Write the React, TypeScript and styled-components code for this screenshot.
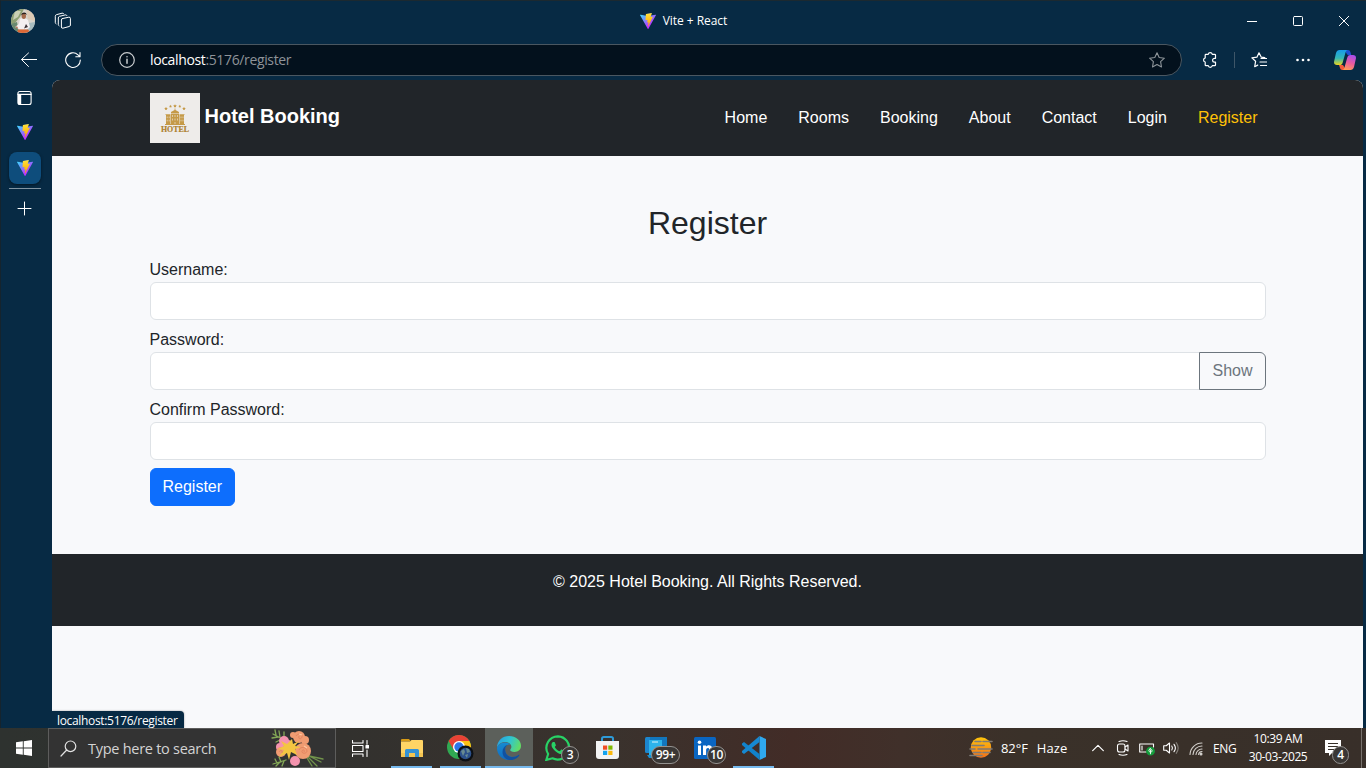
import React from "react";
import styled, { createGlobalStyle, css } from "styled-components";

const UI = `"Open Sans", "Noto Sans", sans-serif`;
const PAGE = `"Liberation Sans", Arial, sans-serif`;

const GlobalStyle = createGlobalStyle`
  *, *::before, *::after { box-sizing: border-box; }
  body { margin: 0; overflow: hidden; background: #072a44; }
  h2, p { margin: 0; }
`;

/* ---------- browser window ---------- */

const Screen = styled.div`
  width: 1366px;
  height: 768px;
  display: flex;
  flex-direction: column;
  overflow: hidden;
  font-family: ${UI};
  color: #fff;
`;

const Browser = styled.div`
  height: 728px;
  display: flex;
  flex-direction: column;
  background: #072a44;
  border-top: 1px solid #1c2930;
  border-left: 1px solid #15242e;
`;

const TitleBar = styled.div`
  height: 39px;
  display: grid;
  grid-template-columns: 1fr auto 1fr;
  align-items: center;
  flex: none;
`;

const ProfileArea = styled.div`
  display: flex;
  align-items: center;
  gap: 19px;
  padding-left: 10px;
`;

const TabTitle = styled.div`
  display: flex;
  align-items: center;
  gap: 7px;
  font-size: 12px;
  line-height: 16px;
  font-weight: 500;
  letter-spacing: -0.05px;
`;

const WindowControls = styled.div`
  display: flex;
  justify-content: flex-end;
  margin-right: -1px;
`;

const WindowButton = styled.div`
  width: 46px;
  height: 39px;
  display: flex;
  align-items: center;
  justify-content: center;
`;

const Toolbar = styled.div`
  height: 40px;
  display: flex;
  align-items: center;
  flex: none;
`;

const ToolSlot = styled.div<{ $w: number }>`
  width: ${(p) => p.$w}px;
  height: 32px;
  flex: none;
  display: flex;
  align-items: center;
  justify-content: center;
`;

const AddressBar = styled.div`
  width: 1081px;
  height: 32px;
  flex: none;
  display: flex;
  align-items: center;
  padding: 0 16px 0 17px;
  border: 1px solid #4a5761;
  border-radius: 16px;
  background: #03111d;
`;

const Url = styled.div`
  flex: 1;
  margin-left: 15px;
  font-size: 14px;
  line-height: 20px;
  letter-spacing: -0.36px;
  color: #8e9398;
  b { font-weight: 400; color: #fff; }
`;

const ToolDivider = styled.div`
  width: 1px;
  height: 16px;
  background: #3e5668;
`;

const BrowserBody = styled.div`
  flex: 1;
  min-height: 0;
  display: flex;
`;

const Sidebar = styled.div`
  width: 51px;
  flex: none;
  display: flex;
  flex-direction: column;
  align-items: center;
  padding: 10px 4px 0 0;
`;

const SideItem = styled.div<{ $h: number; $top?: number; $active?: boolean }>`
  width: 32px;
  height: ${(p) => p.$h}px;
  padding-top: ${(p) => p.$top ?? 0}px;
  flex: none;
  display: flex;
  align-items: center;
  justify-content: center;
  ${(p) =>
    p.$active &&
    css`
      background: #0e4d7c;
      border-radius: 8px;
      box-shadow: 0 1px 3px rgba(0, 0, 0, 0.5);
    `}
`;

const SideDivider = styled.div`
  width: 32px;
  height: 1px;
  margin: 4px 0 12px;
  background: #8294a2;
`;

/* ---------- web page ---------- */

const Viewport = styled.div`
  position: relative;
  width: 1311px;
  border-radius: 8px 8px 0 0;
  overflow: hidden;
  background: #f8f9fb;
  color: #212529;
  font-family: ${PAGE};
  font-size: 16px;
  line-height: 24px;
`;

const Navbar = styled.nav`
  height: 76px;
  display: flex;
  align-items: center;
  justify-content: space-between;
  padding: 0 97.5px;
  background: #212529;
`;

const Brand = styled.div`
  display: flex;
  align-items: center;
  gap: 5px;
  color: #fff;
  font-size: 20px;
  font-weight: 700;
  line-height: 30px;
  span { margin-top: -4px; }
`;

const NavLinks = styled.div`
  display: flex;
  gap: 15px;
`;

const NavLink = styled.a<{ $active?: boolean }>`
  padding: 0 8px;
  color: ${(p) => (p.$active ? "#ffc107" : "#fff")};
`;

const Main = styled.main`
  height: 398px;
  padding: 48px 97.5px;
`;

const Heading = styled.h2`
  height: 38px;
  margin-bottom: 16px;
  text-align: center;
  font-size: 32px;
  font-weight: 400;
  line-height: 38px;
`;

const Field = styled.div`
  margin-bottom: 8px;
`;

const Label = styled.label`
  display: block;
  height: 24px;
`;

const InputGroup = styled.div`
  display: flex;
`;

const Input = styled.input<{ $joined?: boolean }>`
  flex: 1;
  min-width: 0;
  height: 38px;
  padding: 6px 12px;
  border: 1px solid #dee2e6;
  border-radius: ${(p) => (p.$joined ? "6px 0 0 6px" : "6px")};
  background: #fff;
  font: inherit;
  outline: none;
`;

const Button = styled.button<{ $outline?: boolean }>`
  height: 38px;
  padding: 0 12px;
  border: 1px solid ${(p) => (p.$outline ? "#6c757d" : "#0d6efd")};
  border-radius: ${(p) => (p.$outline ? "0 6px 6px 0" : "6px")};
  margin-left: ${(p) => (p.$outline ? "-1px" : "0")};
  background: ${(p) => (p.$outline ? "#f8f9fb" : "#0d6efd")};
  color: ${(p) => (p.$outline ? "#6c757d" : "#fff")};
  font: inherit;
`;

const Footer = styled.footer`
  height: 72px;
  padding-top: 16px;
  background: #212529;
  color: #fff;
  text-align: center;
`;

const StatusBubble = styled.div`
  position: absolute;
  left: 0;
  bottom: 0;
  width: 132px;
  height: 17px;
  padding-left: 5px;
  overflow: hidden;
  border-radius: 0 4px 0 0;
  background: #072a44;
  box-shadow: 0 0 2px rgba(0, 0, 0, 0.4);
  color: #fff;
  font-family: ${UI};
  font-size: 12px;
  line-height: 20px;
  letter-spacing: -0.33px;
  white-space: nowrap;
`;

/* ---------- taskbar ---------- */

const Taskbar = styled.div`
  height: 40px;
  flex: none;
  display: flex;
  background: linear-gradient(90deg, #2e322f 0, #32312e 25%, #3a322d 45%, #422c27 58%, #40302a 66%, #3a3129 75%, #382f29 100%);
`;

const TaskSlot = styled.div<{ $w: number; $active?: boolean; $open?: boolean }>`
  position: relative;
  width: ${(p) => p.$w}px;
  height: 40px;
  flex: none;
  display: flex;
  align-items: center;
  justify-content: center;
  background: ${(p) => (p.$active ? "#5c605b" : "transparent")};
  ${(p) =>
    p.$open &&
    css`
      &::after {
        content: "";
        position: absolute;
        bottom: 0;
        left: ${p.$active ? 0 : 4}px;
        right: ${p.$active ? 0 : 4}px;
        height: 2px;
        background: #76b9ed;
      }
    `}
`;

const SearchBox = styled.div`
  width: 288px;
  flex: none;
  display: flex;
  align-items: center;
  padding-left: 11px;
  border: 1px solid #5d5d5c;
  background: #333333;
  color: #d4d4d4;
  font-size: 14.5px;
  span { flex: 1; margin-left: 11px; letter-spacing: -0.27px; }
`;

const Apps = styled.div`
  display: flex;
  margin-left: 3px;
`;

const Badge = styled.div<{ $left: number; $w: number }>`
  position: absolute;
  left: ${(p) => p.$left}px;
  top: 18px;
  width: ${(p) => p.$w}px;
  height: 18px;
  border: 1px solid #93918f;
  border-radius: 9px;
  background: #3a3735;
  font-size: 12px;
  font-weight: 600;
  line-height: 16px;
  text-align: center;
  letter-spacing: -0.3px;
`;

const Tray = styled.div`
  margin-left: auto;
  display: flex;
  align-items: center;
`;

const Weather = styled.div`
  display: flex;
  align-items: center;
  width: 116px;
  font-size: 13px;
  white-space: nowrap;
  span { letter-spacing: -0.1px; margin-left: 8px; }
  span + span { letter-spacing: 0.1px; margin-left: 9px; }
`;

const Lang = styled.div`
  width: 37px;
  padding-left: 4px;
  font-size: 12px;
  letter-spacing: -0.4px;
`;

const Clock = styled.div`
  width: 64px;
  font-size: 12px;
  line-height: 18px;
  letter-spacing: -0.4px;
  text-align: center;
  white-space: nowrap;
`;

const Notifications = styled.div`
  position: relative;
  width: 51px;
  height: 40px;
  padding: 12px 0 0 15px;
`;

const DesktopEdge = styled.div`
  width: 5px;
  height: 40px;
  border-left: 1px solid #77716c;
`;

/* ---------- icons ---------- */

const Stroke = ({ s = 16, c = "#fff", w = 1.1, box = 16, children }: { s?: number; c?: string; w?: number; box?: number; children: React.ReactNode }) => (
  <svg width={s} height={s} viewBox={`0 0 ${box} ${box}`} fill="none" stroke={c} strokeWidth={w} strokeLinecap="round" strokeLinejoin="round">
    {children}
  </svg>
);

const ViteIcon = ({ id }: { id: string }) => (
  <svg width="16" height="16" viewBox="0 0 256 257">
    <defs>
      <linearGradient id={id + "a"} x1="-.8%" x2="57.6%" y1="7.7%" y2="78.4%">
        <stop offset="0" stopColor="#41D1FF" />
        <stop offset="1" stopColor="#BD34FE" />
      </linearGradient>
      <linearGradient id={id + "b"} x1="43.4%" x2="50.3%" y1="2.2%" y2="89%">
        <stop offset="0" stopColor="#FFEA83" />
        <stop offset=".083" stopColor="#FFDD35" />
        <stop offset="1" stopColor="#FFA800" />
      </linearGradient>
    </defs>
    <path fill={`url(#${id}a)`} d="M255.153 37.938L134.897 252.976c-2.483 4.44-8.862 4.466-11.382.048L.875 37.958c-2.746-4.814 1.371-10.646 6.827-9.67l120.385 21.517a6.537 6.537 0 0 0 2.322-.004l117.867-21.483c5.438-.991 9.574 4.796 6.877 9.62Z" />
    <path fill={`url(#${id}b)`} d="M185.432.063L96.44 17.501a3.268 3.268 0 0 0-2.634 3.014l-5.474 92.456a3.268 3.268 0 0 0 3.997 3.378l24.777-5.718c2.318-.535 4.413 1.507 3.936 3.838l-7.361 36.047c-.495 2.426 1.782 4.5 4.151 3.78l15.304-4.649c2.372-.72 4.652 1.36 4.15 3.788l-11.698 56.621c-.732 3.542 3.979 5.473 5.943 2.437l1.313-2.028l72.516-144.72c1.215-2.423-.88-5.186-3.54-4.672l-25.505 4.922c-2.396.462-4.435-1.77-3.759-4.114l16.646-57.705c.677-2.35-1.37-4.583-3.769-4.113Z" />
  </svg>
);

const Avatar = () => (
  <svg width="24" height="24" viewBox="0 0 24 24">
    <clipPath id="av"><circle cx="12" cy="12" r="12" /></clipPath>
    <g clipPath="url(#av)">
      <rect width="24" height="24" fill="#d8d4cc" />
      <path d="M0 0h13L9 8l-5 6-4 2z" fill="#8d9f72" />
      <path d="M4 2l6 0-3 6-5 3z" fill="#c9cfb4" />
      <path d="M15 0h9v12l-7-2z" fill="#dcc9b4" />
      <path d="M0 15l6-2 2 11H0z" fill="#69896f" />
      <path d="M18 14l6-1v11h-9z" fill="#a8bcc0" />
      <path d="M9 10c3-2 6-1 8 1l2 7-2 2H8l-4-2 4-3z" fill="#f4eff0" />
      <ellipse cx="12.8" cy="7" rx="2.2" ry="3" fill="#a56a4b" />
      <path d="M10.300 6.500c-.3-3.500 5-4.500 5.500-.5l-1.300-.9-3 .1z" fill="#2b211f" />
      <path d="M15 15l2 3-4 1.500z" fill="#3d3338" />
      <path d="M7 20.500l10 0 3 3.500H6z" fill="#dd6836" />
      <path d="M4 17l3 1-1 2z" fill="#b1765a" />
    </g>
  </svg>
);

const HotelLogo = () => (
  <svg width="50" height="50" viewBox="0 0 50 50">
    <rect width="50" height="50" fill="#eeecea" />
    <g fill="#c59a48">
      <path d="M16 13.800l.6 1.100 1.200.2-.9.9.2 1.200-1.100-.6-1.100.6.2-1.200-.9-.9 1.200-.2zM20.500 11.800l.5.9 1 .2-.7.7.1 1-.9-.4-.9.4.1-1-.7-.7 1-.2zM25 11.200l.6 1.100 1.200.2-.9.9.2 1.200-1.100-.6-1.100.6.2-1.200-.9-.9 1.200-.2zM29.800 11.800l.5.9 1 .2-.7.7.1 1-.9-.4-.9.4.1-1-.7-.7 1-.2zM34 13.800l.6 1.100 1.200.2-.9.9.2 1.200-1.100-.6-1.100.6.2-1.200-.9-.9 1.200-.2z" />
      <path d="M24.600 15.500h.8v1.500l3.600 2v1h-8v-1l3.600-2zM21 20.500h8V31h-8zM16 22h4.500v9H16zM29.500 22H34v9h-4.500zM15.500 21.300h5v.8h-5zM29.500 21.300h5v.8h-5zM15 31h20v1H15z" />
    </g>
    <path d="M22.500 22v2M25 22v2M27.500 22v2M22.500 25.500v2M25 25.500v2M27.500 25.500v2M17.200 23.500v1.700M19.200 23.500v1.700M31 23.500v1.700M33 23.500v1.700M17.200 26.700v1.700M19.200 26.700v1.700M31 26.700v1.700M33 26.700v1.700M25 29v2" stroke="#eeebe7" strokeWidth=".6" />
    <text x="25" y="38.700" fontFamily="Liberation Serif, serif" fontSize="8.500" fill="#ad7f2c" stroke="#ad7f2c" strokeWidth=".2" textAnchor="middle" textLength="28" lengthAdjust="spacingAndGlyphs">HOTEL</text>
  </svg>
);

const CopilotIcon = () => (
  <svg width="22" height="20" viewBox="0 0 22 20">
    <defs>
      <linearGradient id="cpa" x1="0" y1="0" x2="0" y2="1"><stop offset="0" stopColor="#189bea" /><stop offset=".55" stopColor="#35b7b4" /><stop offset="1" stopColor="#edd51c" /></linearGradient>
      <linearGradient id="cpb" x1=".6" y1="0" x2=".3" y2="1"><stop offset="0" stopColor="#a84ee8" /><stop offset=".5" stopColor="#e95b9e" /><stop offset="1" stopColor="#ff9b55" /></linearGradient>
    </defs>
    <path d="M10 0h3.800c1.400 0 2.200.8 2.600 2l.8 3h-3.500z" fill="#1d50d3" />
    <path d="M12 20H8.400c-1.300 0-2-.7-2.400-2l-1-3h4z" fill="#f45b38" />
    <path d="M5.500 0h8c-1 .3-1.500 1-1.900 2.300L8.700 12.400C8.200 14.200 7.200 15 5.500 15H3c-2.300 0-3.500-1.500-2.800-4L2 3C2.600 1 3.800 0 5.500 0z" fill="url(#cpa)" />
    <path d="M16.500 20h-8c1-.3 1.500-1 1.900-2.300l2.900-10.100C13.800 5.800 14.800 5 16.500 5H19c2.300 0 3.500 1.500 2.800 4L20 17c-.6 2-1.800 3-3.500 3z" fill="url(#cpb)" />
  </svg>
);

const Flowers = () => (
  <svg width="56" height="38" viewBox="0 0 56 38">
    <g stroke="#84a857" strokeWidth="1.300" fill="none" strokeLinecap="round">
      <path d="M2 5l13 7M4 1l1 5M8 2l1 6M13 3v7M1 9l6-1M5 13l6-3M2 35l13-4M4 30l2 4M8 28l2 5M5 37l4-4M11 37l2-5" />
      <path d="M38 27l14 3M38 27l12 6M37 28l9 9M36 29l5 8" stroke="#71934b" />
    </g>
    <g fill="#f493ae"><circle cx="13" cy="12" r="5" /><circle cx="9" cy="18" r="4" /><circle cx="24" cy="32" r="5" /><circle cx="17" cy="15" r="4" /></g>
    <g fill="#f09c72"><circle cx="28" cy="8" r="6" /><circle cx="22" cy="6" r="3" /><circle cx="32" cy="22" r="8" /><circle cx="10" cy="23" r="5" /><circle cx="34" cy="11" r="4" /></g>
    <path d="M21 10l1 5 6-3-4 5 6 1-6 2 2 6-6-3-2 8-2-7-8 4 5-7-6-1 6-3-3-5 6 3z" fill="#f4c542" />
    <g fill="none" stroke="#e0805c" strokeWidth=".8"><path d="M25 7c2-3 7-2 6 1-1 3-4 2-3-1M28 21c1-4 8-3 8 1 0 3-6 3-5 0 1-2 3-1 2 1M8 23c1-2 4-2 3 1" /></g>
    <path d="M28 5l3 1M33 17l3 2" stroke="#ffc8a0" strokeWidth="1.200" fill="none" />
  </svg>
);

const ExplorerIcon = () => (
  <svg width="22" height="20" viewBox="0 0 22 20">
    <path d="M0 1.500Q0 1 1 1h7l2 2.500H0z" fill="#d89b16" />
    <path d="M0 3.500h9l1.500-1.500H21q1 0 1 1V19H0z" fill="#ffd465" />
    <path d="M0 15h22v4H0z" fill="#f3c552" />
    <path d="M4 19v-6.500Q4 11 5.500 11h11q1.500 0 1.500 1.500V19h-4v-4H8v4z" fill="#3492d5" />
  </svg>
);

const ChromeIcon = () => (
  <svg width="27" height="27" viewBox="0 0 27 27">
    <circle cx="12" cy="12" r="12" fill="#30a852" />
    <path d="M1.600 6A12 12 0 0 1 22.400 6H12L6.800 15z" fill="#e94235" />
    <path d="M22.400 6A12 12 0 0 1 12 24l5.200-9L12 6z" fill="#fbc116" />
    <circle cx="12" cy="12" r="6" fill="#fff" /><circle cx="12" cy="12" r="4.700" fill="#2c76e8" />
    <circle cx="18.500" cy="18.500" r="8" fill="#0c1015" />
    <circle cx="18.500" cy="18.500" r="5.800" fill="#2b508a" />
    <path d="M14 16l3-2 1 3-2 4zM19 13l3 1 1 3-3 1zM18 20l3-1-1 4z" fill="#678a91" />
  </svg>
);

const EdgeIcon = () => (
  <svg width="24" height="24" viewBox="0 0 24 24">
    <defs>
      <linearGradient id="eg1" x1="0" y1=".2" x2="1" y2=".5"><stop offset="0" stopColor="#279fe0" /><stop offset=".5" stopColor="#2ec4d5" /><stop offset="1" stopColor="#62dc65" /></linearGradient>
      <linearGradient id="eg2" x1="0" y1="0" x2="0" y2="1"><stop offset="0" stopColor="#168bd1" /><stop offset="1" stopColor="#116cc0" /></linearGradient>
    </defs>
    <path d="M0 12C0 4.500 5.500 0 12 0c7 0 12 4.500 12 9.800 0 4-3 6.200-6.400 6.200-3 0-4.400-1.200-4.400-2 0-.7 1.200-1.300 1.200-3.200C14.400 8 11.500 6 8 6 4 6 1 8.500 0 12z" fill="url(#eg1)" />
    <path d="M0 12C1 8.500 4 6.400 8 6.400c2.400 0 4.600.8 5.700 2.300-3.200-.7-5.700 1.700-5.700 5 0 4 3.200 7.300 7.500 7.300 2.400 0 4.500-.8 6-2-.3.400-.6.800-1 1.200C18.400 22.600 15.600 24 12 24 5 24 0 18.600 0 12z" fill="url(#eg2)" />
    <path d="M10.600 8.700C7.500 11 8 14 8.500 16c1 3.600 4 5 7 5 2.400 0 4.300-.6 6-1.900 1-.7 1.100.1.500.8C19.500 23 16 24 12.600 24 8 23.500 5.500 20 5.500 16c0-3.500 2-6.300 5.100-7.300z" fill="#1151a0" />
  </svg>
);

const WhatsAppIcon = () => (
  <svg width="26" height="26" viewBox="0 0 24 24" fill="#28d366">
    <path d="M17.472 14.382c-.297-.149-1.758-.867-2.030-.967-.273-.099-.471-.148-.670.150-.197.297-.767.966-.940 1.164-.173.199-.347.223-.644.075-.297-.150-1.255-.463-2.390-1.475-.883-.788-1.480-1.761-1.653-2.059-.173-.297-.018-.458.130-.606.134-.133.298-.347.446-.520.149-.174.198-.298.298-.497.099-.198.050-.371-.025-.520-.075-.149-.669-1.612-.916-2.207-.242-.579-.487-.500-.669-.510-.173-.008-.371-.010-.570-.010-.198 0-.520.074-.792.372-.272.297-1.040 1.016-1.040 2.479 0 1.462 1.065 2.875 1.213 3.074.149.198 2.096 3.200 5.077 4.487.709.306 1.262.489 1.694.625.712.227 1.360.195 1.871.118.571-.085 1.758-.719 2.006-1.413.248-.694.248-1.289.173-1.413-.074-.124-.272-.198-.570-.347z" />
    <path d="M12 1.200A10.700 10.700 0 0 0 2.900 17.500L1.200 23l5.700-1.500A10.700 10.700 0 1 0 12 1.200z" fill="none" stroke="#28d366" strokeWidth="2" />
  </svg>
);

const StoreIcon = () => (
  <svg width="23" height="24" viewBox="0 0 23 24">
    <path d="M6 6V2.800Q6 1 7.800 1h7.400Q17 1 17 2.800V6" fill="none" stroke="#2e9bd8" strokeWidth="2" />
    <path d="M0 5h23v15q0 3-3 3H3q-3 0-3-3z" fill="#f3f3f3" />
    <path d="M7 9.500h4.200v4.200H7z" fill="#f04e23" /><path d="M12.300 9.500h4.200v4.200h-4.200z" fill="#7fba00" />
    <path d="M7 14.800h4.200V19H7z" fill="#15a3ee" /><path d="M12.300 14.800h4.200V19h-4.200z" fill="#fdb90b" />
  </svg>
);

const PhoneIcon = () => (
  <svg width="22" height="22" viewBox="0 0 22 22">
    <path d="M5 0h17v18H5z" fill="#1277bd" />
    <path d="M0 1.500Q0 0 1.500 0H5v16H1.500Q0 16 0 14.500z" fill="#1c86ce" />
    <path d="M4 3h13v15H4z" fill="#2cb3ec" /><path d="M7 5h6" stroke="#d8f5ff" />
    <path d="M2 18h15v3H4z" fill="#1b91d2" />
  </svg>
);

const LinkedInIcon = () => (
  <svg width="22" height="22" viewBox="0 0 22 22">
    <rect width="22" height="22" rx="1.500" fill="#0a66c2" />
    <rect x="4" y="8.500" width="3" height="9.500" fill="#fff" /><circle cx="5.500" cy="5.300" r="1.800" fill="#fff" />
    <path d="M9 8.500h3v1.300c1.800-2.600 6.500-1.900 6.500 2.600V18h-3.100v-5c0-2.900-3.300-2.600-3.300 0v5H9z" fill="#fff" />
  </svg>
);

const VsCodeIcon = () => (
  <svg width="24" height="24" viewBox="0 0 24 24">
    <path d="M17.500 0L24 3v18l-6.500 3z" fill="#2fa8ee" />
    <path d="M0 7.500l2-1.600L17.500 18v6L0 9z" fill="#1183cc" />
    <path d="M0 16.500l2 1.600L17.500 6V0L0 15z" fill="#1688d1" />
  </svg>
);

const navItems = ["Home", "Rooms", "Booking", "About", "Contact", "Login", "Register"];

const RegisterPage = () => (
  <Viewport>
    <Navbar>
      <Brand><HotelLogo /><span>Hotel Booking</span></Brand>
      <NavLinks>
        {navItems.map((n) => <NavLink key={n} $active={n === "Register"}>{n}</NavLink>)}
      </NavLinks>
    </Navbar>
    <Main>
      <Heading>Register</Heading>
      <Field>
        <Label>Username:</Label>
        <InputGroup><Input /></InputGroup>
      </Field>
      <Field>
        <Label>Password:</Label>
        <InputGroup><Input $joined /><Button $outline>Show</Button></InputGroup>
      </Field>
      <Field>
        <Label>Confirm Password:</Label>
        <InputGroup><Input /></InputGroup>
      </Field>
      <Button>Register</Button>
    </Main>
    <Footer><p>© 2025 Hotel Booking. All Rights Reserved.</p></Footer>
    <StatusBubble>localhost:5176/register</StatusBubble>
  </Viewport>
);

export default function App() {
  return (
    <Screen>
      <GlobalStyle />
      <Browser>
        <TitleBar>
          <ProfileArea>
            <Avatar />
            <Stroke s={18} box={18} w={1}>
              <path d="M8.300 6.600l6.500-1.400q1.600-.2 1.600 1.200v6.600q0 1.200-1.200 1.500l-6.300 1.700q-1.500.2-1.500-1.200V8q0-1.200.9-1.400z" />
              <path d="M5 13.800q-.7-.3-.7-1.300V6q0-1.300 1.100-1.600l5.800-1.500q1.300-.3 1.700.6" />
              <path d="M2 11.800q-.7-.3-.7-1.300V4.300q0-1.300 1.100-1.600L8 1.200q1-.2 1.500.3" />
            </Stroke>
          </ProfileArea>
          <TabTitle><ViteIcon id="t" />Vite + React</TabTitle>
          <WindowControls>
            <WindowButton><Stroke s={10} box={10} w={1}><path d="M0 5.500h10" /></Stroke></WindowButton>
            <WindowButton><Stroke s={10} box={10} w={1}><rect x=".5" y=".5" width="9" height="9" rx="1" /></Stroke></WindowButton>
            <WindowButton><Stroke s={10} box={10} w={1}><path d="M.3.3l9.400 9.400M9.700.3L.3 9.700" /></Stroke></WindowButton>
          </WindowControls>
        </TitleBar>
        <Toolbar>
          <ToolSlot $w={56}><Stroke w={1}><path d="M7.500 1L.5 7.500l7 7M.7 7.500h15" /></Stroke></ToolSlot>
          <ToolSlot $w={32}><Stroke w={1.100}><path d="M15.300 8A7.300 7.300 0 1 1 13 2.800L15 4.700M15 .6v4.200h-4.200" /></Stroke></ToolSlot>
          <ToolSlot $w={12} />
          <AddressBar>
            <Stroke c="#c9cdd0" w={1.200}><circle cx="8" cy="8" r="7.300" /><path d="M8 7.200v4M8 4.700v.1" strokeWidth="1.500" /></Stroke>
            <Url><b>localhost</b>:5176/register</Url>
            <Stroke c="#8d9499"><path d="M8 .8l2.200 4.700 5.200.7-3.800 3.500.9 5.300L8 12.500 3.500 15l.9-5.300L.6 6.200l5.200-.7z" /></Stroke>
          </AddressBar>
          <ToolSlot $w={4} />
          <ToolSlot $w={48}>
            <Stroke w={1.200}><path d="M4 2.300h2.200a2.100 2.100 0 0 1 4.100 0h2.400q.8 0 .8.800v3.200h-1a1.900 1.900 0 0 0 0 3.800h1v2.800q0 .8-.8.800h-2.400a2.100 2.100 0 0 1-4.100 0H4q-.8 0-.8-.8V10a2.100 2.100 0 0 1 0-4.100V3.100q0-.8.8-.8z" /></Stroke>
          </ToolSlot>
          <ToolDivider />
          <ToolSlot $w={48}>
            <Stroke w={1.200}><path d="M13.800 5.600l-3.500-.4L8 .8 5.900 5.200l-5 .7 3.700 3.400-.9 5.400 3-1.600M10 6.500h5.700M9 10h6.700M9.500 13.500h6.200" /></Stroke>
          </ToolSlot>
          <ToolSlot $w={40}>
            <svg width="16" height="4" viewBox="0 0 16 4" fill="#fff"><circle cx="2.500" cy="2" r="1.300" /><circle cx="8" cy="2" r="1.300" /><circle cx="13.500" cy="2" r="1.300" /></svg>
          </ToolSlot>
          <ToolSlot $w={43}><CopilotIcon /></ToolSlot>
        </Toolbar>
        <BrowserBody>
          <Sidebar>
            <SideItem $h={16}><Stroke box={16} w={1.100}><rect x=".9" y="1.500" width="13.200" height="13" rx="2" /><path d="M1 4.400h13" /><path d="M2.600 5v9" strokeWidth="3.200" strokeLinecap="butt" /></Stroke></SideItem>
            <SideItem $h={46} $top={5}><ViteIcon id="s" /></SideItem>
            <SideItem $h={32} $active><ViteIcon id="u" /></SideItem>
            <SideDivider />
            <SideItem $h={16}><Stroke box={16} w={1}><path d="M7.500 1v13M1 7.500h13" /></Stroke></SideItem>
          </Sidebar>
          <RegisterPage />
        </BrowserBody>
      </Browser>
      <Taskbar>
        <TaskSlot $w={48}>
          <svg width="16" height="16" viewBox="0 0 16 16" fill="#fff"><path d="M0 2.200L6.800 1.300v6.200H0zM7.700 1.200L16 0v7.500H7.700zM0 8.400h6.800v6.300L0 13.800zM7.700 8.400H16V16l-8.300-1.200z" /></svg>
        </TaskSlot>
        <SearchBox>
          <Stroke s={17} box={17} c="#e2e2e2" w={1.200}><circle cx="10.500" cy="6.300" r="5.300" /><path d="M6.700 10L1 16" /></Stroke>
          <span>Type here to search</span>
          <Flowers />
          <ToolSlot $w={8} />
        </SearchBox>
        <TaskSlot $w={48}>
          <Stroke s={17} box={17} w={1.100}><path d="M.5.5v2.500h10.500V.5M.5 16.500V14h10.500v2.500M.5 5.500h10.500v6H.5zM15 .5v3.800M15 10v6.500" /><rect x="14" y="5.500" width="2.500" height="2.500" fill="#fff" /></Stroke>
        </TaskSlot>
        <Apps>
          <TaskSlot $w={49} $open><ExplorerIcon /></TaskSlot>
          <TaskSlot $w={49} $open><ChromeIcon /></TaskSlot>
          <TaskSlot $w={48} $open $active><EdgeIcon /></TaskSlot>
          <TaskSlot $w={50}><WhatsAppIcon /><Badge $left={28} $w={18}>3</Badge></TaskSlot>
          <TaskSlot $w={48}><StoreIcon /></TaskSlot>
          <TaskSlot $w={49}><PhoneIcon /><Badge $left={20} $w={29}>99+</Badge></TaskSlot>
          <TaskSlot $w={49}><LinkedInIcon /><Badge $left={27} $w={19}>10</Badge></TaskSlot>
          <TaskSlot $w={49} $open><VsCodeIcon /></TaskSlot>
        </Apps>
        <Tray>
          <Weather>
            <svg width="24" height="22" viewBox="0 0 24 22">
              <defs><linearGradient id="sun" x1="0" y1="0" x2="0" y2="1"><stop offset="0" stopColor="#ffc50b" /><stop offset="1" stopColor="#f2711b" /></linearGradient></defs>
              <circle cx="12" cy="10.500" r="10.200" fill="url(#sun)" />
              <path d="M6 4.500h6M14 4.500h9M3 8.500h12M9 12h14M1 12h5M4 15.500h8M14 15.500h7M1 18.500h12" stroke="#817b75" strokeWidth="1.600" strokeLinecap="round" />
            </svg>
            <span>82°F</span><span>Haze</span>
          </Weather>
          <ToolSlot $w={26}><Stroke s={12} box={12} w={1.200}><path d="M.7 8.700L6 3.400l5.300 5.300" /></Stroke></ToolSlot>
          <ToolSlot $w={24}><Stroke w={1.100}><path d="M4 1.500q4-1.500 8 0M4 14.500q4 1.500 8 0" /><rect x="2.500" y="4" width="7.500" height="8" rx="2" /><path d="M10 7l3-2v6l-3-2" /></Stroke></ToolSlot>
          <ToolSlot $w={24}><Stroke w={1.100}><path d="M14.500 7V4H.7v8h6.500M3 6v4" /><circle cx="11.500" cy="11.200" r="3.800" fill="#149d3c" stroke="#149d3c" /><path d="M11.500 13.800V10M9.900 10.700c0 2 3.200 2 3.200 0l-1.600-2.100z" strokeWidth=".9" /></Stroke></ToolSlot>
          <ToolSlot $w={24}><Stroke w={1.100}><path d="M.7 5.700h2.500L6.500 3v10L3.200 10.300H.7zM8.800 6q1.300 2 0 4M11 4.300q2.800 3.700 0 7.400" /><path d="M13.200 2.700q4 5.300 0 10.600" stroke="#827d77" /></Stroke></ToolSlot>
          <ToolSlot $w={26}><Stroke w={1.100} c="#d2cfcb"><path d="M2 14.500A12 12 0 0 1 14 3M5 14.500a9 9 0 0 1 9-8.500M8 14.500a6 6 0 0 1 6-5.500M10.500 14.500a3.500 3.500 0 0 1 3.500-3" /><circle cx="13" cy="14" r="1" fill="#fff" /></Stroke></ToolSlot>
          <Lang>ENG</Lang>
          <Clock>10:39 AM<br />30-03-2025</Clock>
          <Notifications>
            <svg width="16" height="18" viewBox="0 0 16 18"><path d="M0 0h16v13H7l-3 3v-3H0z" fill="#fff" /><path d="M3 3.500h10M3 6.500h10M3 9.500h8" stroke="#38312b" /></svg>
            <Badge $left={22} $w={17}>4</Badge>
          </Notifications>
          <DesktopEdge />
        </Tray>
      </Taskbar>
    </Screen>
  );
}
